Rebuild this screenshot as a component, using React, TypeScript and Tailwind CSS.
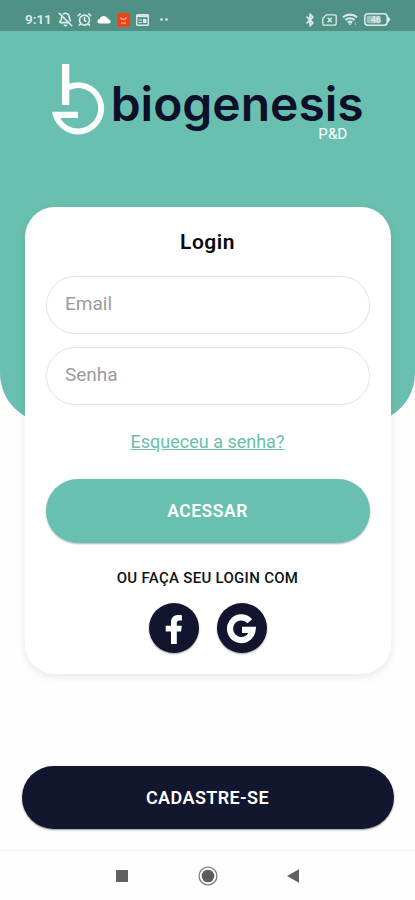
import React, { useState } from 'react'
import { AlarmClock, BellOff, Bluetooth } from 'lucide-react'

function StatusBar() {
  return (
    <div className="flex h-[31px] items-center bg-[#509085] pt-2 pl-[25px] pr-6 text-[#dcebe8]">
      <span className="w-[33px] text-[13.5px] leading-none font-semibold">9:11</span>
      <BellOff className="h-[15px] w-[15px]" strokeWidth={2.6} />
      <AlarmClock className="ml-[4px] h-[15px] w-[15px]" strokeWidth={2.6} />
      <svg className="ml-[5px] h-[9px] w-[14px]" viewBox="0 0 14 9">
        <path d="M2.4 8.5a2.1 2.1 0 0 1 .2-4.2A4 4 0 0 1 9.4 2.3a2.6 2.6 0 0 1 2.2 2.2 2 2 0 0 1 .2 4z" fill="#fff" />
      </svg>
      <svg className="ml-[6px] h-[14px] w-[13px]" viewBox="0 0 13 14">
        <rect width="13" height="14" rx="2.5" fill="#f24317" />
        <path d="M3.5 4.5c1 2.6 5 2.6 6 0M4 10h5" fill="none" stroke="#ffc8b5" strokeWidth="1.2" />
      </svg>
      <svg className="ml-[6px] h-[12px] w-[13px]" viewBox="0 0 13 12">
        <rect x=".7" y=".7" width="11.6" height="10.6" rx=".6" fill="none" stroke="currentColor" strokeWidth="1.4" />
        <path d="M1 2.2h11" stroke="currentColor" strokeWidth="2" />
        <path d="M2.5 6H6M2.5 8.5H6" stroke="currentColor" />
        <rect x="7" y="5" width="3.5" height="4" fill="currentColor" />
      </svg>
      <svg className="ml-[11px] h-[3px] w-[8px]" viewBox="0 0 8 3">
        <circle cx="1.5" cy="1.5" r="1.3" fill="currentColor" />
        <circle cx="6.5" cy="1.5" r="1.3" fill="currentColor" />
      </svg>

      <div className="ml-auto flex items-center">
        <Bluetooth className="h-[14px] w-[14px]" strokeWidth={2.8} />
        <svg className="ml-[5px] h-[12px] w-[15px]" viewBox="0 0 15 12">
          <path d="M4.5.8h8.2a1.5 1.5 0 0 1 1.5 1.5v7.4a1.5 1.5 0 0 1-1.5 1.5H2.3A1.5 1.5 0 0 1 .8 9.7V4.3z" fill="none" stroke="currentColor" strokeWidth="1.3" />
          <path d="m5.7 3.8 4 4.4m0-4.4-4 4.4" stroke="currentColor" strokeWidth="1.4" />
        </svg>
        <svg className="ml-[5px] h-[13px] w-[16px]" viewBox="0 0 16 13">
          <path d="M1 4.3a10.4 10.4 0 0 1 14 0M3.4 7a6.9 6.9 0 0 1 9.2 0M5.8 9.5a3.4 3.4 0 0 1 4.4 0" fill="none" stroke="currentColor" strokeWidth="2.1" />
          <path d="m6.3 10.5 1.7 2 1.7-2z" fill="currentColor" />
          <path d="M13.5 9.5v3" stroke="currentColor" strokeWidth=".8" opacity=".6" />
        </svg>
        <svg className="ml-[6px] h-[13px] w-[27px]" viewBox="0 0 27 13">
          <rect x=".8" y=".8" width="22.4" height="11.4" rx="3.2" fill="none" stroke="currentColor" strokeWidth="1.5" />
          <path d="M24 3.2 26.6 6.5 24 9.8z" fill="currentColor" />
          <rect x="2.7" y="2.7" width="14" height="7.6" rx="1.5" fill="currentColor" opacity=".55" />
          <text x="11.8" y="9.6" textAnchor="middle" fontSize="8.5" fontWeight="700" fill="currentColor">46</text>
        </svg>
      </div>
    </div>
  )
}

function Logo() {
  return (
    <svg className="mx-auto block h-[84px] w-[315px]" viewBox="50 60 315 84">
      <path d="M62 64h7.3v41H62z" fill="#fff" />
      <path d="M67 88A23.1 23.1 0 1 1 55.4 113" fill="none" stroke="#fff" strokeWidth="5.9" />
      <path d="M52 111.7h26v6.3H53.8z" fill="#fff" />
      <text x="110.7" y="121" fontSize="47.5" fontWeight="600" fill="#0d1028" textLength="253" lengthAdjust="spacingAndGlyphs" className="font-['Inter',sans-serif]">
        biogenesis
      </text>
      <text x="318.3" y="138.5" fontSize="14.5" fill="#fff" textLength="29" lengthAdjust="spacingAndGlyphs" className="font-['Roboto',sans-serif]">
        P&amp;D
      </text>
    </svg>
  )
}

function NavigationBar() {
  return (
    <div className="flex h-[50px] items-center justify-center gap-[69.5px] border-t border-[#f5f5f5] bg-[#fefefe]">
      <span className="h-3 w-3 bg-[#616161]" />
      <svg className="h-5 w-5" viewBox="0 0 20 20">
        <circle cx="10" cy="10" r="8.9" fill="none" stroke="#777" strokeWidth="1.2" />
        <circle cx="10" cy="10" r="6.3" fill="#5c5c5c" />
      </svg>
      <svg className="h-[14px] w-3" viewBox="0 0 12 14">
        <path d="M12 .3v13.4L0 7z" fill="#616161" />
      </svg>
    </div>
  )
}

const inputClass =
  'h-[58px] w-full rounded-full border border-[#e2e2e2] bg-transparent px-[18.5px] pb-[3px] text-[19px] text-gray-700 outline-none placeholder:text-[#9b9b9f]'

export default function App() {
  const [email, setEmail] = useState('')
  const [password, setPassword] = useState('')

  return (
    <div className="flex h-[900px] w-full flex-col overflow-hidden bg-[#fefefe] font-['Roboto',sans-serif]">
      <StatusBar />
      <div className="h-[392px] shrink-0 rounded-b-[50px] bg-[#6ac0b0] pt-[29px]">
        <Logo />
      </div>

      <form
        className="mx-auto -mt-[216px] flex h-[467px] w-[366px] shrink-0 flex-col rounded-[30px] bg-white px-[21px] pt-[22px] shadow-[0_3px_10px_rgba(0,0,0,0.09)]"
        onSubmit={(e) => e.preventDefault()}
      >
        <h1 className="h-[47px] text-center text-[21px] leading-[26px] font-semibold tracking-[0.5px] text-[#08080f]">Login</h1>
        <div className="flex flex-col gap-[13px]">
          <input className={inputClass} type="email" placeholder="Email" value={email} onChange={(e) => setEmail(e.target.value)} />
          <input className={inputClass} type="password" placeholder="Senha" value={password} onChange={(e) => setPassword(e.target.value)} />
        </div>
        <a href="#" className="mt-[25px] self-center text-[18px] leading-6 text-[#6ac0a9] underline">
          Esqueceu a senha?
        </a>
        <button type="submit" className="mt-[25px] h-[64px] shrink-0 rounded-full bg-[#6ac0b0] text-[17.5px] font-semibold tracking-[0.5px] text-white shadow-[0_1px_2px_rgba(0,0,0,0.3)]">
          ACESSAR
        </button>
        <p className="mt-[25px] text-center text-[15px] leading-5 font-medium tracking-[0.3px] text-[#111]">OU FAÇA SEU LOGIN COM</p>
        <div className="mt-[15px] flex justify-center gap-[18px]">
          <button type="button" aria-label="Facebook" className="h-[50px] w-[50px] rounded-full bg-[#12152d] shadow-[0_1px_2px_rgba(0,0,0,0.4)]">
            <svg viewBox="0 0 50 50">
              <path d="M22 41V28.4h-5.3v-5.6H22v-3.2c0-5 2.6-7.6 7.4-7.6 1.4 0 2.7.1 3.5.3v5.2h-2.4c-2 0-2.7.9-2.7 2.5v2.8h5l-.7 5.6h-4.3V41z" fill="#fff" />
            </svg>
          </button>
          <button type="button" aria-label="Google" className="h-[50px] w-[50px] rounded-full bg-[#12152d] shadow-[0_1px_2px_rgba(0,0,0,0.4)]">
            <svg viewBox="0 0 50 50">
              <path d="M32.8 18.2A11.3 11.3 0 1 0 35.6 26.8H25" fill="none" stroke="#fff" strokeWidth="6.2" />
            </svg>
          </button>
        </div>
      </form>

      <button type="button" className="mx-auto mt-[92px] h-[63px] w-[372px] shrink-0 rounded-full bg-[#12162e] text-[18px] font-semibold tracking-[0.4px] text-white shadow-[0_1px_2px_rgba(0,0,0,0.4)]">
        CADASTRE-SE
      </button>
      <div className="mt-auto">
        <NavigationBar />
      </div>
    </div>
  )
}
